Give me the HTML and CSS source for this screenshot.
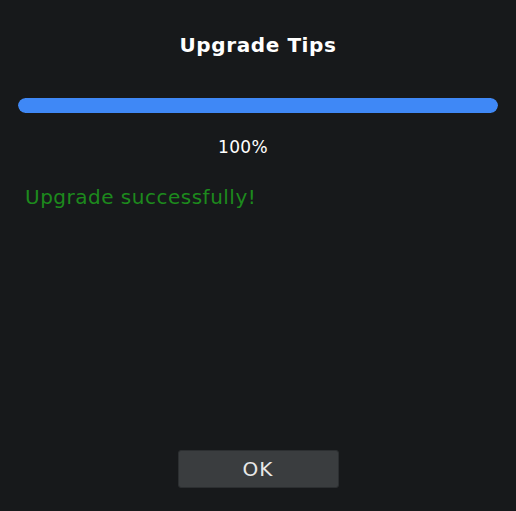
FILE: index.html
```html
<!DOCTYPE html>
<html lang="en">
<head>
  <meta charset="UTF-8" />
  <title>Upgrade Tips</title>
  <link rel="stylesheet" href="styles.css">
</head>
<body>

<main class="dialogo">
  <h1 class="titulo">Upgrade Tips</h1>

  <div class="barra-container">
    <div class="barra-progreso" style="width:100%;"></div>
  </div>
  <div class="porcentaje">100%</div>

  <p class="estado">Upgrade successfully!</p>

  <div class="acciones">
    <button class="btn-ok">OK</button>
  </div>
</main>

</body>
</html>
```

FILE: styles.css
```css
* { box-sizing: border-box; }

html, body {
  height: 100%;
}

body {
  margin: 0;
  background: #17191b;
  color: #ffffff;
  font-family: 'DejaVu Sans', sans-serif;
}

.dialogo {
  height: 511px;
  display: flex;
  flex-direction: column;
  padding: 0 18px 23px;
}

.titulo {
  margin: 32px 0 0;
  font-size: 20px;
  font-weight: bold;
  letter-spacing: 0.6px;
  text-align: center;
  line-height: 26px;
}

.barra-container {
  margin-top: 40px;
  height: 15px;
  background: #2a2d30;
  border-radius: 8px;
  overflow: hidden;
}

.barra-progreso {
  height: 100%;
  background: #3f88f6;
  border-radius: 8px;
}

.porcentaje {
  margin-top: 24px;
  font-size: 17px;
  line-height: 20px;
  letter-spacing: 0.3px;
  text-align: center;
  padding-right: 30px;
}

.estado {
  margin: 28px 0 0 7px;
  font-size: 20px;
  line-height: 24px;
  letter-spacing: 0.5px;
  color: #1d8a1d;
}

.acciones {
  margin-top: auto;
  display: flex;
  justify-content: center;
}

.btn-ok {
  width: 161px;
  height: 38px;
  background: #3a3d3f;
  color: #e8e8e8;
  border: 1px solid #2c2f31;
  border-radius: 3px;
  font-family: inherit;
  font-size: 20px;
  letter-spacing: 1px;
  cursor: pointer;
}
```
